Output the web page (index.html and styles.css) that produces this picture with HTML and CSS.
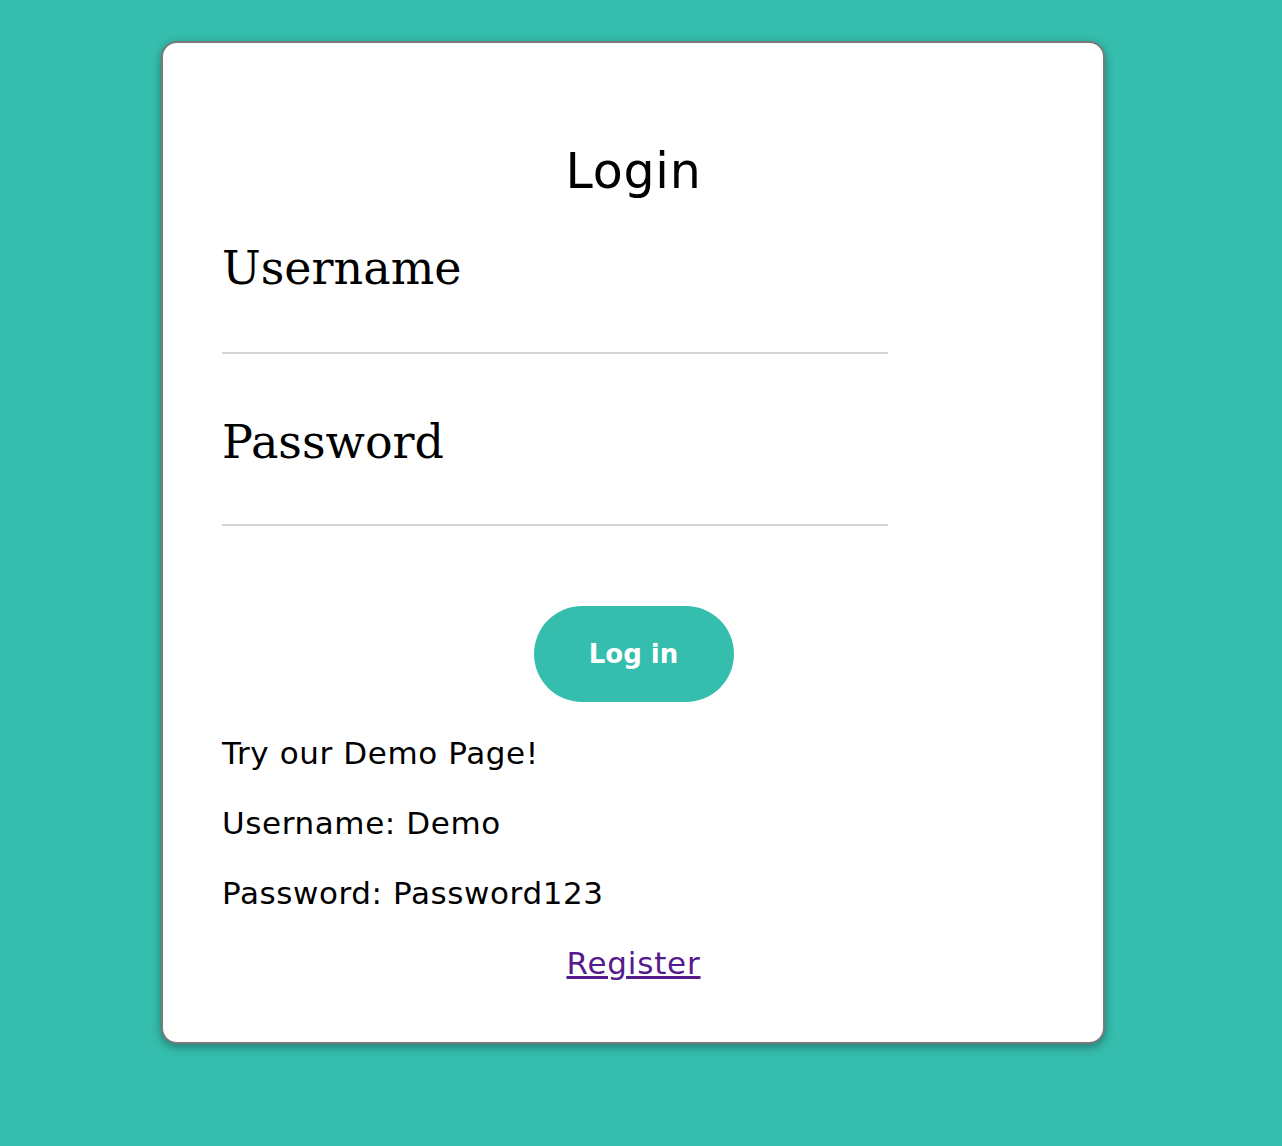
FILE: index.html
```html
<!DOCTYPE html>
<html>
<head>
<meta charset="utf-8">
<link rel="stylesheet" href="styles.css">
</head>
<body>
<div class="page">
  <div class="card">
    <h1 class="title">Login</h1>
    <form class="form">
      <label class="label" for="u">Username</label>
      <input class="field" id="u" type="text">
      <label class="label label-pw" for="p">Password</label>
      <input class="field field-pw" id="p" type="password">
      <div class="actions"><button class="btn" type="button">Log in</button></div>
    </form>
    <p class="info">Try our Demo Page!</p>
    <p class="info">Username: Demo</p>
    <p class="info">Password: Password123</p>
    <div class="reg"><a class="link" href="#">Register</a></div>
  </div>
</div>
</body>
</html>
```
FILE: styles.css
```css
html, body {
  margin: 0;
  padding: 0;
  background: #35bdad;
}
.page {
  width: 1266px;
  padding-top: 41px;
  padding-bottom: 100px;
}
.card {
  box-sizing: border-box;
  width: 944px;
  height: 1003px;
  margin: 0 auto;
  padding: 0 58px 0 59px;
  background: #fff;
  border: 2px solid #7a7a7a;
  border-radius: 16px;
  box-shadow: 0 3px 10px rgba(0,0,0,0.35);
  font-family: "DejaVu Sans", sans-serif;
  color: #000;
}
.title {
  margin: 0;
  padding-top: 101px;
  text-align: center;
  font-weight: 400;
  font-size: 49px;
  letter-spacing: 0.8px;
  line-height: 56px;
}
.form {
  display: flex;
  flex-direction: column;
  align-items: flex-start;
}
.label {
  font-family: "DejaVu Serif", serif;
  font-size: 46px;
  line-height: 60px;
  margin-top: 38px;
}
.label-pw {
  margin-top: 58px;
}
.field {
  width: 666px;
  height: 40px;
  border: none;
  border-bottom: 2px solid #d6d6d6;
  margin-top: 14px;
  padding: 0;
  outline: none;
}
.field-pw {
  margin-top: 12px;
}
.actions {
  align-self: stretch;
  display: flex;
  justify-content: center;
  margin-top: 80px;
}
.btn {
  width: 200px;
  height: 96px;
  border: none;
  border-radius: 48px;
  background: #35bdad;
  color: #fff;
  font-family: "DejaVu Sans", sans-serif;
  font-weight: 700;
  font-size: 26px;
}
.info {
  margin: 0;
  font-size: 31px;
  letter-spacing: 0.6px;
  line-height: 70px;
}
.info:first-of-type {
  margin-top: 16px;
}
.reg {
  text-align: center;
  font-size: 31px;
  letter-spacing: 0.8px;
  line-height: 70px;
}
.link {
  color: #551a8b;
}
```
